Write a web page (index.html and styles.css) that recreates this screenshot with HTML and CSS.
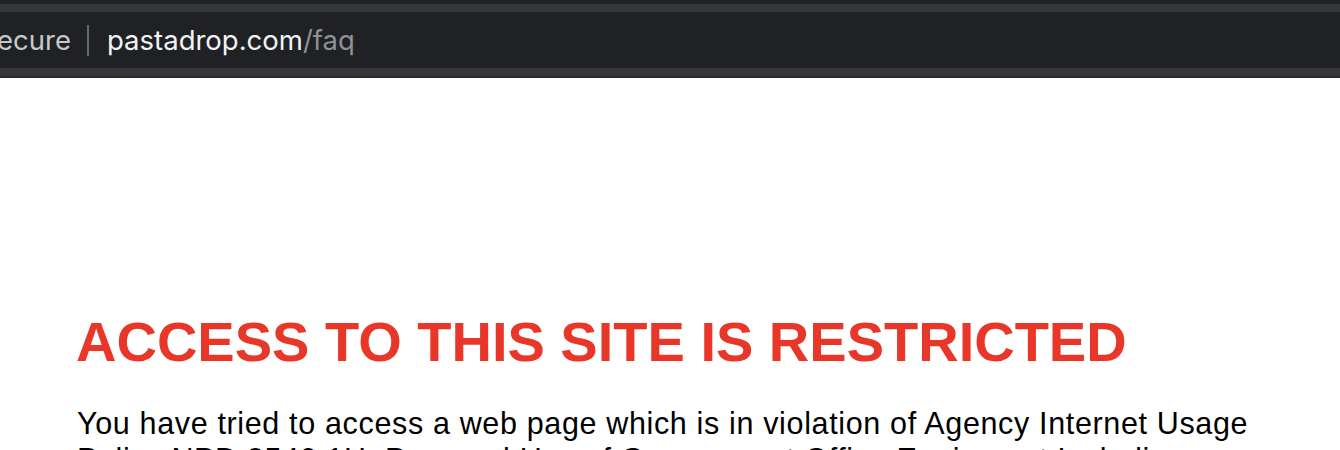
FILE: index.html
```html
<!DOCTYPE html>
<html>
<head>
    <meta charset="utf-8" />
    <link rel="stylesheet" href="styles.css">
</head>
<body>
    <div class="toolbar">
        <div class="omnibox">
            <span class="secure"><span>Not Secure</span></span>
            <span class="divider"></span>
            <span class="host">pastadrop.com</span><span class="path">/faq</span>
        </div>
    </div>
    <div class="page">
        <h1 class="warning">ACCESS TO THIS SITE IS RESTRICTED</h1>
        <p class="notice">
            You have tried to access a web page which is in violation of Agency Internet Usage
            Policy NPD 2540.1H, Personal Use of Government Office Equipment Including Information Technology.
        </p>
    </div>
</body>
</html>
```

FILE: styles.css
```css
body {
    margin: 0;
    background: #ffffff;
    overflow: hidden;
}

.toolbar {
    background: #35363a;
    border-top: 4px solid #202124;
    border-bottom: 2px solid #2a2b2e;
    padding: 8px 0;
}

.omnibox {
    display: flex;
    align-items: center;
    height: 56px;
    background: #202124;
    font-family: "Inter", "Noto Sans", sans-serif;
    font-size: 27.5px;
    white-space: nowrap;
    overflow: hidden;
}

.secure {
    display: flex;
    justify-content: flex-end;
    width: 71px;
    overflow: hidden;
    color: #c6c8cc;
}

.divider {
    width: 2px;
    height: 31px;
    background: #66696d;
    margin: 0 18px 0 16px;
}

.host {
    color: #f1f3f4;
}

.path {
    color: #8e9196;
}

.page {
    padding: 232px 0 0 76px;
    font-family: "Liberation Sans", Arial, sans-serif;
}

.warning {
    margin: 0;
    color: #e83628;
    font-size: 56px;
    font-weight: bold;
    line-height: 64px;
}

.notice {
    margin: 31px 0 0 1px;
    color: #000000;
    font-size: 30.5px;
    letter-spacing: 0.65px;
    line-height: 36px;
    max-width: 1200px;
}
```
